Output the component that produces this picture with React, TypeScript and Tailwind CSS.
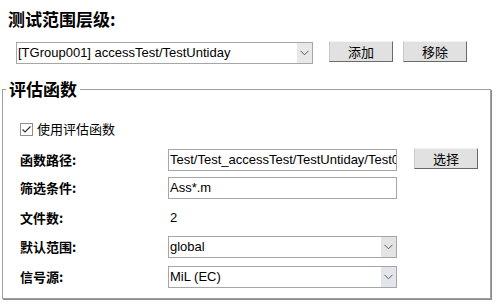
import React from 'react';

const cjk = "font-['Noto_Sans_CJK_SC','Noto_Sans',sans-serif]";
const latin = "font-['Liberation_Sans','Noto_Sans_CJK_SC',sans-serif]";

const Chevron = () => (
  <svg width="9" height="6" viewBox="0 0 9 6" fill="none">
    <path d="M0.5 0.8 L4.5 4.8 L8.5 0.8" stroke="#5a5a5a" strokeWidth="1" />
  </svg>
);

const Select: React.FC<{ value: string; className?: string; arrowBg?: string }> = ({
  value,
  className = '',
  arrowBg = 'bg-[#e5e5e5]',
}) => (
  <div className={`flex h-[22px] border border-[#a6a6a6] bg-white ${className}`}>
    <div className={`flex-1 overflow-hidden whitespace-nowrap pl-[1px] text-[13px] leading-[20px] text-black ${latin}`}>
      {value}
    </div>
    <div className={`flex w-[15px] items-center justify-center ${arrowBg}`}>
      <Chevron />
    </div>
  </div>
);

const Input: React.FC<{ value: string }> = ({ value }) => (
  <div
    className={`h-[22px] w-[229px] overflow-hidden whitespace-nowrap border border-[#a6a6a6] bg-white pl-[1px] text-[13px] leading-[20px] text-black ${latin}`}
  >
    {value}
  </div>
);

const Button: React.FC<{ label: string; className?: string }> = ({ label, className = '' }) => (
  <button
    className={`h-[21px] w-[64px] border border-t-[#f4f4f4] border-l-[#c8c8c8] border-r-[#6a6a6a] border-b-[#6a6a6a] bg-[#e1e1e1] text-[13px] leading-[18px] text-black ${cjk} ${className}`}
  >
    {label}
  </button>
);

const Row: React.FC<{ label: string; className?: string; children: React.ReactNode }> = ({
  label,
  className = '',
  children,
}) => (
  <div className={`flex h-[22px] items-center ${className}`}>
    <div className={`w-[148px] text-[13px] font-bold text-black ${cjk}`}>{label}</div>
    {children}
  </div>
);

export default function App() {
  return (
    <div className="flex h-[303px] w-[497px] flex-col overflow-hidden bg-white">
      <div className={`h-[41px] pl-[8px] pt-[8px] text-[17px] font-bold leading-[22px] text-black ${cjk}`}>
        测试范围层级:
      </div>

      <div className="flex items-start pl-[16px]">
        <Select value="[TGroup001] accessTest/TestUntiday" className="mt-[1px] w-[297px]" arrowBg="bg-[#e8e8e8]" />
        <Button label="添加" className="ml-[16px]" />
        <Button label="移除" className="ml-[10px]" />
      </div>

      <fieldset className="ml-[2px] mr-[6px] mt-[15px] h-[220px] border border-[#a0a0a0] shadow-[1px_1px_0_#8a8a8a]">
        <legend className={`ml-[3px] px-[3px] text-[17px] font-bold leading-[20px] text-black ${cjk}`}>
          评估函数
        </legend>
        <div className="flex flex-col pl-[17px]">
          <div className="mt-[23px] flex h-[14px] items-center">
            <svg width="13" height="13" viewBox="0 0 13 13" className="shrink-0">
              <rect x="0.5" y="0.5" width="12" height="12" fill="white" stroke="#8f8f8f" />
              <path d="M2.5 6.5 L5 9 L10.5 3.5" stroke="#333" strokeWidth="1.2" fill="none" />
            </svg>
            <span className={`ml-[4px] text-[13px] text-black ${cjk}`}>使用评估函数</span>
          </div>

          <Row label="函数路径:" className="mt-[13px]">
            <Input value="Test/Test_accessTest/TestUntiday/Test001/" />
            <Button label="选择" className="ml-[17px] -mt-[3px]" />
          </Row>
          <Row label="筛选条件:" className="mt-[6px]">
            <Input value="Ass*.m" />
          </Row>
          <Row label="文件数:" className="mt-[8px]">
            <span className={`pl-[2px] text-[13px] text-black ${latin}`}>2</span>
          </Row>
          <Row label="默认范围:" className="mt-[7px]">
            <Select value="global" className="w-[229px]" arrowBg="bg-[#e3e3e3]" />
          </Row>
          <Row label="信号源:" className="mt-[8px]">
            <Select value="MiL (EC)" className="w-[229px]" arrowBg="bg-[#e2e6ea]" />
          </Row>
        </div>
      </fieldset>
    </div>
  );
}
